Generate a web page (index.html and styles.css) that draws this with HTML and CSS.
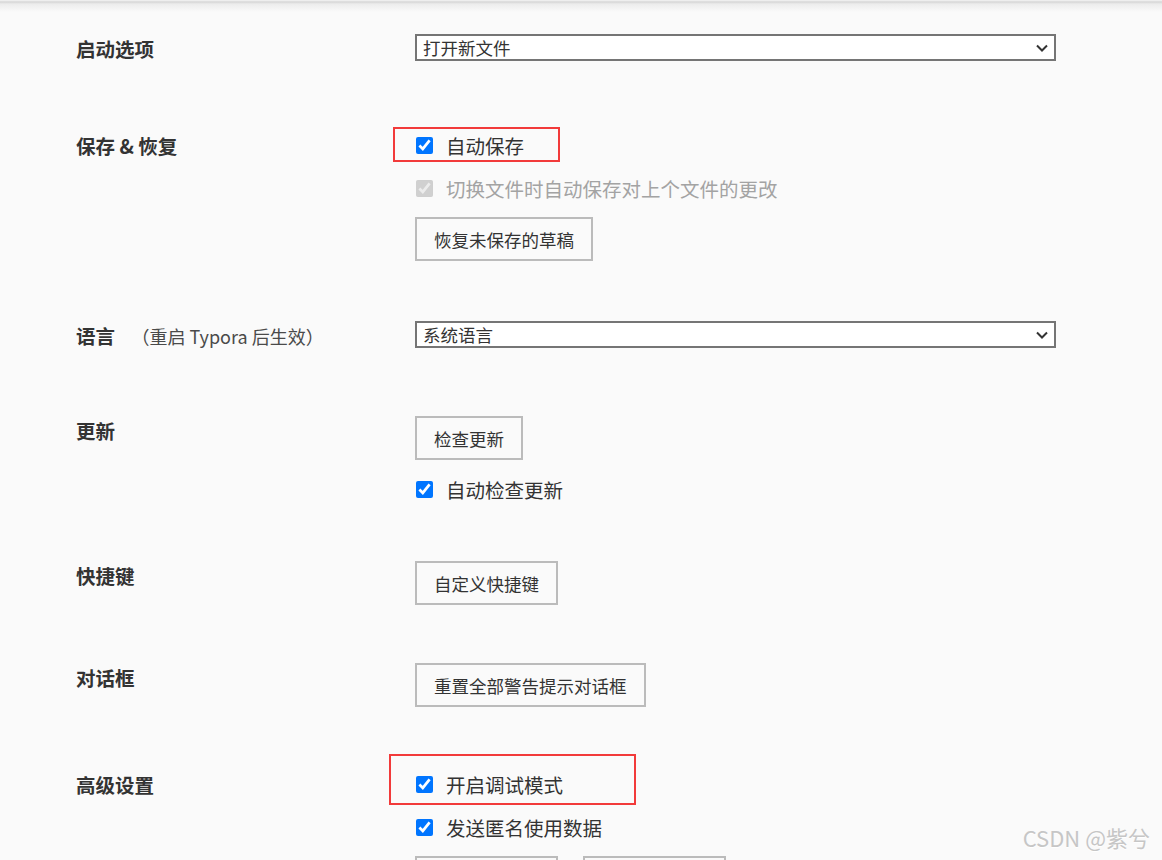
FILE: index.html
```html
<!DOCTYPE html>
<html lang="zh-CN">
<head>
    <meta charset="UTF-8">
    <meta name="viewport" content="width=device-width, initial-scale=1.0">
    <title>偏好设置 - 通用</title>
    <link rel="stylesheet" href="styles.css">
</head>
<body>

<div class="topbar"></div>

<div class="settings">
    <div class="section">
        <div class="section-title">启动选项</div>
        <div class="section-body">
            <div class="select-wrap">
                <select class="select">
                    <option>打开新文件</option>
                    <option>重新打开上次使用的文件和目录</option>
                    <option>打开指定目录</option>
                </select>
                <svg class="chevron" width="12" height="8" viewBox="0 0 12 8"><path d="M1 1.5 L6 6.5 L11 1.5" fill="none" stroke="#333" stroke-width="2"/></svg>
            </div>
        </div>
    </div>

    <div class="section">
        <div class="section-title">保存 &amp; 恢复</div>
        <div class="section-body">
            <label class="check-row">
                <input type="checkbox" checked>
                <span>自动保存</span>
                <span class="mark mark-save"></span>
            </label>
            <label class="check-row disabled">
                <input type="checkbox" checked disabled>
                <span>切换文件时自动保存对上个文件的更改</span>
            </label>
            <button class="btn">恢复未保存的草稿</button>
        </div>
    </div>

    <div class="section">
        <div class="section-title">语言 <span class="hint">（重启 Typora 后生效）</span></div>
        <div class="section-body">
            <div class="select-wrap">
                <select class="select">
                    <option>系统语言</option>
                    <option>简体中文</option>
                    <option>English</option>
                </select>
                <svg class="chevron" width="12" height="8" viewBox="0 0 12 8"><path d="M1 1.5 L6 6.5 L11 1.5" fill="none" stroke="#333" stroke-width="2"/></svg>
            </div>
        </div>
    </div>

    <div class="section">
        <div class="section-title">更新</div>
        <div class="section-body">
            <button class="btn">检查更新</button>
            <label class="check-row">
                <input type="checkbox" checked>
                <span>自动检查更新</span>
            </label>
        </div>
    </div>

    <div class="section">
        <div class="section-title">快捷键</div>
        <div class="section-body">
            <button class="btn">自定义快捷键</button>
        </div>
    </div>

    <div class="section">
        <div class="section-title">对话框</div>
        <div class="section-body">
            <button class="btn">重置全部警告提示对话框</button>
        </div>
    </div>

    <div class="section">
        <div class="section-title">高级设置</div>
        <div class="section-body">
            <label class="check-row">
                <input type="checkbox" checked>
                <span>开启调试模式</span>
                <span class="mark mark-debug"></span>
            </label>
            <label class="check-row">
                <input type="checkbox" checked>
                <span>发送匿名使用数据</span>
            </label>
            <div class="btn-group">
                <button class="btn">打开高级设置</button>
                <button class="btn">重置高级设置</button>
            </div>
        </div>
    </div>
</div>

<div class="watermark">CSDN @紫兮</div>

</body>
</html>
```

FILE: styles.css
```css
html, body {
    margin: 0;
    padding: 0;
    height: 100%;
    overflow: hidden;
}
body {
    background-color: #fafafa;
    font-family: "Noto Sans CJK SC", "Noto Sans", sans-serif;
    color: #333;
    position: relative;
}
.topbar {
    height: 12px;
    background: linear-gradient(#f6f6f6 0, #d6d6d6 2px, #ececec 4px, #fafafa 12px);
}
.settings {
    padding: 22px 0 0 76px;
}
.section {
    display: flex;
    margin-bottom: 60px;
}
.section:nth-child(n+3) {
    margin-bottom: 58px;
}
.section:last-child {
    padding-top: 5px;
}
.section-title {
    flex: none;
    width: 339px;
    font-size: 19.5px;
    font-weight: bold;
    line-height: 30px;
    color: #333;
}
.hint {
    margin-left: 12px;
    font-size: 18px;
    font-weight: normal;
    color: #4a4a4a;
}
.section-body {
    width: 641px;
    display: flex;
    flex-direction: column;
    align-items: flex-start;
    gap: 15px;
}
.select-wrap {
    position: relative;
    width: 100%;
    margin-bottom: 10px;
}
.select {
    appearance: none;
    -webkit-appearance: none;
    display: block;
    width: 100%;
    height: 27px;
    margin: 0;
    padding: 0 30px 0 6px;
    border: 2px solid #757575;
    border-radius: 0;
    background-color: #fff;
    font-family: inherit;
    font-size: 17.5px;
    line-height: 23px;
    color: #333;
}
.chevron {
    position: absolute;
    right: 8px;
    top: 10px;
    pointer-events: none;
}
.check-row {
    position: relative;
    display: flex;
    align-items: center;
    gap: 13px;
    height: 28px;
    font-size: 19.5px;
    color: #333;
}
.check-row input {
    width: 17px;
    height: 17px;
    margin: 0 0 0 1px;
}
.check-row.disabled {
    color: #a3a3a3;
}
.mark {
    position: absolute;
    border: 2px solid #f23a3a;
    pointer-events: none;
}
.mark-save {
    left: -22px;
    top: -4px;
    width: 163px;
    height: 31px;
}
.mark-debug {
    left: -26px;
    top: -16px;
    width: 243px;
    height: 47px;
}
.btn {
    height: 44px;
    padding: 0 17px;
    border: 2px solid #bbb;
    border-radius: 0;
    background-color: #fafafa;
    font-family: inherit;
    font-size: 17.5px;
    color: #333;
    cursor: pointer;
}
.btn-group {
    display: flex;
    gap: 25px;
}
.watermark {
    position: absolute;
    right: 12px;
    bottom: 7px;
    font-size: 22px;
    color: #c6c6c6;
    text-shadow: 0 1px 0 #fff;
}
```
